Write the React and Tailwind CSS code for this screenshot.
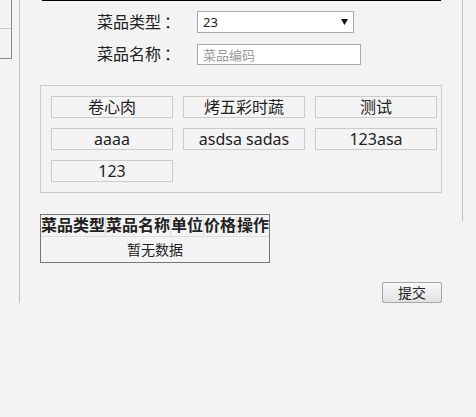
const dishes = ['卷心肉', '烤五彩时蔬', '测试', 'aaaa', 'asdsa sadas', '123asa', '123'];

const App = () => {
  return (
    <div className="w-[476px] h-[417px] bg-[#f3f3f3] flex overflow-hidden text-[#222] font-['Noto_Sans','Noto_Sans_CJK_SC',sans-serif]">
      {/* Sidebar stub */}
      <div className="w-[19px] shrink-0">
        <div className="w-[12px] h-[59px] border-r border-b border-[#888]">
          <div className="h-[29px] border-b border-[#ccc]" />
        </div>
      </div>

      {/* Main */}
      <div className="w-[457px] h-[303px] shrink-0 border-l border-[#c0c0c0]">
        <div className="w-[443px] h-[221px] border-r border-[#c0c0c0]">
          <div className="ml-[22px] w-[399px] h-px bg-black" />

          {/* Form */}
          <div className="mt-[10px] flex items-center h-[22px]">
            <span className="ml-[77px] w-[80px] text-[16px] leading-[22px] whitespace-nowrap">
              菜品类型<span className="ml-[3px]">：</span>
            </span>
            <div className="ml-[20px] w-[157px] h-[22px] bg-white border border-[#a9a9a9] flex items-center justify-between pl-[5px] pr-[5px]">
              <span className="text-[13px] leading-[20px]">23</span>
              <svg width="7" height="6" viewBox="0 0 7 6">
                <polygon points="0,0 7,0 3.5,6" fill="#111" />
              </svg>
            </div>
          </div>
          <div className="mt-[11px] flex items-center h-[21px]">
            <span className="ml-[77px] w-[80px] text-[16px] leading-[21px] whitespace-nowrap">
              菜品名称<span className="ml-[3px]">：</span>
            </span>
            <input
              placeholder="菜品编码"
              className="ml-[20px] w-[164px] h-[21px] bg-white border border-[#a9a9a9] px-[5px] text-[13px] outline-none placeholder:text-[#999]"
            />
          </div>

          {/* Dish buttons */}
          <div className="mt-[20px] ml-[20px] w-[402px] h-[108px] border border-[#ccc] pt-[10px] pl-[10px] grid grid-cols-[repeat(3,122px)] auto-rows-[22px] gap-[10px] content-start">
            {dishes.map((d) => (
              <div
                key={d}
                className="border border-[#ccc] bg-[#f4f4f4] flex items-center justify-center text-[16px] leading-[20px] whitespace-nowrap"
              >
                {d}
              </div>
            ))}
          </div>

          {/* Table */}
          <div className="mt-[21px] ml-[20px] inline-block align-top border border-[#777] bg-[#f4f4f4]">
            <table className="border-collapse">
              <thead>
                <tr className="border-b border-[#ddd]">
                  <th className="w-[64px] h-[21px] p-0 text-[16px] leading-[21px] font-bold whitespace-nowrap border-r border-[#ddd]">菜品类型</th>
                  <th className="w-[64px] h-[21px] p-0 text-[16px] leading-[21px] font-bold whitespace-nowrap border-r border-[#ddd]">菜品名称</th>
                  <th className="w-[32px] h-[21px] p-0 text-[16px] leading-[21px] font-bold whitespace-nowrap border-r border-[#ddd]">单位</th>
                  <th className="w-[32px] h-[21px] p-0 text-[16px] leading-[21px] font-bold whitespace-nowrap border-r border-[#ddd]">价格</th>
                  <th className="w-[32px] h-[21px] p-0 text-[16px] leading-[21px] font-bold whitespace-nowrap">操作</th>
                </tr>
              </thead>
              <tbody>
                <tr>
                  <td colSpan={5} className="h-[25px] p-0 text-center text-[14px] leading-[25px]">暂无数据</td>
                </tr>
              </tbody>
            </table>
          </div>
        </div>

        {/* Submit */}
        <div className="mt-[61px] w-[443px] pr-[21px] flex justify-end">
          <button className="w-[60px] h-[21px] border border-[#a6a6a6] rounded-[2px] bg-gradient-to-b from-[#f8f8f8] to-[#e2e2e2] text-[14px] leading-[19px]">
            提交
          </button>
        </div>
      </div>
    </div>
  );
};

export default App;
